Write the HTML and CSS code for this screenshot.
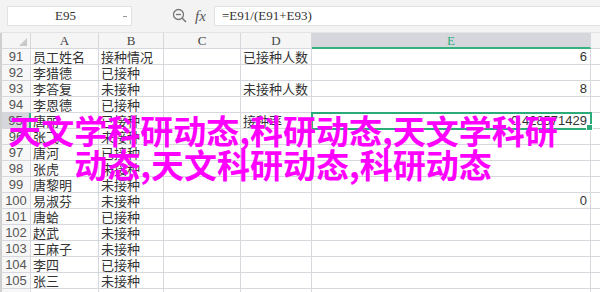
FILE: index.html
```html
<!DOCTYPE html>
<html>
<head>
  <meta charset="UTF-8">
  <title>天文学科研动态</title>
  <link rel="stylesheet" href="styles.css">
</head>
<body>
  <div class="app">
    <div class="toolbar">
      <div class="namebox">
        <span class="ref">E95</span>
        <span class="caret"></span>
      </div>
      <div class="tools">
        <svg class="zoom-icon" width="16" height="16" viewBox="0 0 16 16">
          <circle cx="6.5" cy="6.5" r="5" fill="none" stroke="#777" stroke-width="1.3"/>
          <line x1="4" y1="6.5" x2="9" y2="6.5" stroke="#777" stroke-width="1.3"/>
          <line x1="10.2" y1="10.2" x2="14" y2="14" stroke="#777" stroke-width="1.5"/>
        </svg>
        <span class="fx">fx</span>
      </div>
      <div class="formula">=E91/(E91+E93)</div>
    </div>

    <div class="sheet">
      <div class="grid">
        <div class="corner"><span class="tri"></span></div>
        <div class="colhdr">A</div>
        <div class="colhdr">B</div>
        <div class="colhdr">C</div>
        <div class="colhdr">D</div>
        <div class="colhdr hsel">E</div>
        <div class="colhdr last"></div>

        <div class="rowhdr">91</div>
        <div class="cell">员工姓名</div>
        <div class="cell">接种情况</div>
        <div class="cell"></div>
        <div class="cell">已接种人数</div>
        <div class="cell num">6</div>
        <div class="cell last"></div>

        <div class="rowhdr">92</div>
        <div class="cell">李猎德</div>
        <div class="cell">已接种</div>
        <div class="cell"></div>
        <div class="cell"></div>
        <div class="cell"></div>
        <div class="cell last"></div>

        <div class="rowhdr">93</div>
        <div class="cell">李答复</div>
        <div class="cell">未接种</div>
        <div class="cell"></div>
        <div class="cell">未接种人数</div>
        <div class="cell num">8</div>
        <div class="cell last"></div>

        <div class="rowhdr">94</div>
        <div class="cell">李恩德</div>
        <div class="cell">已接种</div>
        <div class="cell"></div>
        <div class="cell"></div>
        <div class="cell"></div>
        <div class="cell last"></div>

        <div class="rowhdr rsel">95</div>
        <div class="cell">唐丽</div>
        <div class="cell">已接种</div>
        <div class="cell"></div>
        <div class="cell">接种率</div>
        <div class="cell num sel">0.428571429</div>
        <div class="cell last"></div>

        <div class="rowhdr">96</div>
        <div class="cell">张飞</div>
        <div class="cell">未接种</div>
        <div class="cell"></div>
        <div class="cell"></div>
        <div class="cell"></div>
        <div class="cell last"></div>

        <div class="rowhdr">97</div>
        <div class="cell">唐河</div>
        <div class="cell">已接种</div>
        <div class="cell"></div>
        <div class="cell"></div>
        <div class="cell"></div>
        <div class="cell last"></div>

        <div class="rowhdr">98</div>
        <div class="cell">张虎</div>
        <div class="cell">未接种</div>
        <div class="cell"></div>
        <div class="cell"></div>
        <div class="cell"></div>
        <div class="cell last"></div>

        <div class="rowhdr">99</div>
        <div class="cell">唐黎明</div>
        <div class="cell">未接种</div>
        <div class="cell"></div>
        <div class="cell"></div>
        <div class="cell"></div>
        <div class="cell last"></div>

        <div class="rowhdr">100</div>
        <div class="cell">易淑芬</div>
        <div class="cell">未接种</div>
        <div class="cell"></div>
        <div class="cell"></div>
        <div class="cell num">0</div>
        <div class="cell last"></div>

        <div class="rowhdr">101</div>
        <div class="cell">唐蛤</div>
        <div class="cell">已接种</div>
        <div class="cell"></div>
        <div class="cell"></div>
        <div class="cell"></div>
        <div class="cell last"></div>

        <div class="rowhdr">102</div>
        <div class="cell">赵武</div>
        <div class="cell">未接种</div>
        <div class="cell"></div>
        <div class="cell"></div>
        <div class="cell"></div>
        <div class="cell last"></div>

        <div class="rowhdr">103</div>
        <div class="cell">王麻子</div>
        <div class="cell">未接种</div>
        <div class="cell"></div>
        <div class="cell"></div>
        <div class="cell"></div>
        <div class="cell last"></div>

        <div class="rowhdr">104</div>
        <div class="cell">李四</div>
        <div class="cell">已接种</div>
        <div class="cell"></div>
        <div class="cell"></div>
        <div class="cell"></div>
        <div class="cell last"></div>

        <div class="rowhdr">105</div>
        <div class="cell">张三</div>
        <div class="cell">未接种</div>
        <div class="cell"></div>
        <div class="cell"></div>
        <div class="cell"></div>
        <div class="cell last"></div>

        <div class="rowhdr"></div>
        <div class="cell"></div>
        <div class="cell"></div>
        <div class="cell"></div>
        <div class="cell"></div>
        <div class="cell"></div>
        <div class="cell last"></div>
      </div>

      <div class="banner">天文学科研动态,科研动态,天文学科研动态,天文科研动态,科研动态</div>
    </div>
  </div>
</body>
</html>
```

FILE: styles.css
```css
html, body {
  margin: 0;
  padding: 0;
  background: #fff;
  overflow: hidden;
}
.app {
  width: 600px;
  height: 292px;
  font-family: "Noto Sans CJK SC", sans-serif;
  color: #333;
  overflow: hidden;
}
.toolbar {
  display: flex;
  align-items: center;
  height: 33px;
  padding: 0 0 0 7px;
  box-sizing: border-box;
  background: #f3f3f3;
  border-bottom: 1px solid #e4e4e4;
}
.namebox {
  display: flex;
  align-items: center;
  width: 125px;
  height: 20px;
  box-sizing: border-box;
  background: #fff;
  border: 1px solid #e2e2e2;
}
.ref {
  flex: 1;
  text-align: center;
  font: 13px/18px "Liberation Serif", serif;
  color: #333;
}
.caret {
  width: 4px;
  height: 1px;
  margin-right: 4px;
  background: #999;
}
.tools {
  display: flex;
  align-items: center;
  width: 82px;
  padding-left: 40px;
  box-sizing: border-box;
}
.zoom-icon {
  margin-right: 7px;
}
.fx {
  font: italic 15px/18px "Liberation Serif", serif;
  color: #555;
}
.formula {
  flex: 1;
  height: 20px;
  box-sizing: border-box;
  padding-left: 7px;
  background: #fff;
  border: 1px solid #e2e2e2;
  border-right: 0;
  font: 13px/18px "Liberation Serif", serif;
  color: #333;
}
.sheet {
  position: relative;
}
.grid {
  display: grid;
  grid-template-columns: 31px 68px 65px 77px 71px 279px 9px;
  grid-auto-rows: 16px;
}
.grid > div {
  box-sizing: border-box;
  border-right: 1px solid #d6d8de;
  border-bottom: 1px solid #d6d8de;
  font-size: 13px;
  line-height: 15px;
  white-space: nowrap;
}
.grid > .last {
  border-right: 0;
}
.corner {
  background: #f5f5f5;
  position: relative;
  border-left: 2px solid #cfcfcf;
}
.tri {
  position: absolute;
  right: 3px;
  bottom: 2px;
  width: 0;
  height: 0;
  border-left: 8px solid transparent;
  border-bottom: 8px solid #c9c9c9;
}
.colhdr {
  background: #f5f5f5;
  text-align: center;
  font-family: "Liberation Serif", serif;
  color: #444;
}
.grid > .hsel {
  background: #d5d7dc;
  color: #2fae7b;
  border-bottom: 2px solid #33b27f;
}
.rowhdr {
  background: #f7f7f7;
  border-left: 2px solid #cfcfcf;
  text-align: center;
  font-family: "Liberation Sans", sans-serif;
  color: #555;
}
.grid > .rsel {
  background: #d5d7dc;
  border-right: 2px solid #33b27f;
}
.cell {
  padding: 0 2px;
  color: #333;
}
.num {
  text-align: right;
  padding-right: 3px;
  font-family: "Liberation Sans", sans-serif;
}
.grid > .sel {
  outline: 2px solid #2bab78;
  outline-offset: -1px;
  position: relative;
}
.sel::after {
  content: "";
  position: absolute;
  right: -3px;
  bottom: -3px;
  width: 5px;
  height: 5px;
  background: #2bab78;
  border: 1px solid #fff;
}
.banner {
  position: absolute;
  top: 80px;
  left: 0;
  width: 566px;
  text-align: center;
  font: 700 33px/34px "Noto Sans CJK SC", sans-serif;
  color: #ff00ff;
}
```
